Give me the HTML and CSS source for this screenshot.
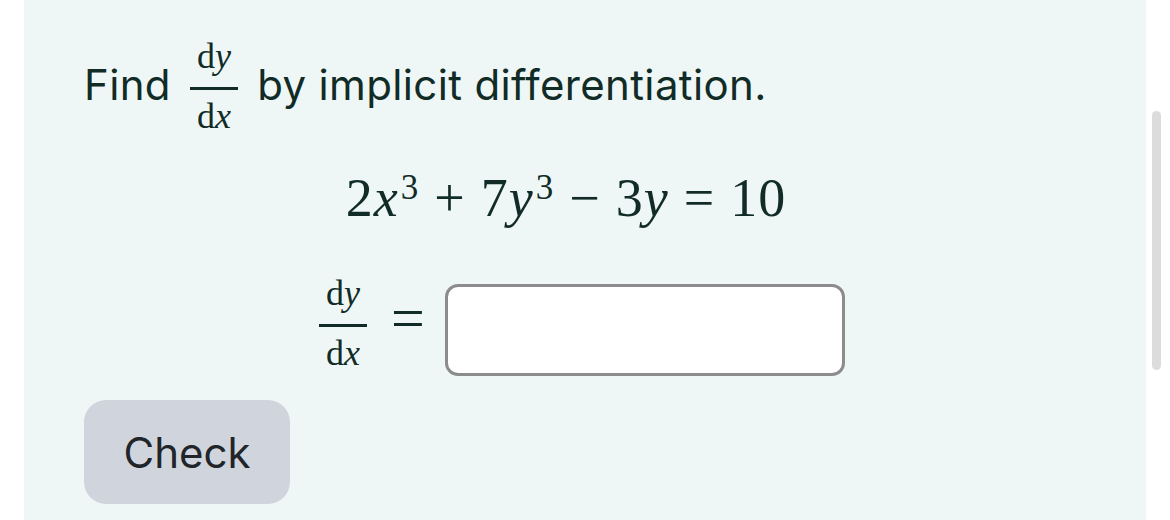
FILE: index.html
```html
<!DOCTYPE html>
<html>
<head>
<meta charset="utf-8">
<link rel="stylesheet" href="styles.css">
</head>
<body>
<div class="panel">
  <div class="title">Find <span class="frac"><span class="num"><span class="rm">d</span><span class="it">y</span></span><span class="bar"></span><span class="den"><span class="rm">d</span><span class="it">x</span></span></span> by implicit differentiation.</div>
  <div class="equation"><span class="rm">2</span><span class="it">x</span><span class="sup">3</span><span class="op">+</span><span class="rm">7</span><span class="it">y</span><span class="sup">3</span><span class="op">−</span><span class="rm">3</span><span class="it">y</span><span class="rel">=</span><span class="rm">10</span></div>
  <div class="answer-row">
    <span class="frac big"><span class="num"><span class="rm">d</span><span class="it">y</span></span><span class="bar"></span><span class="den"><span class="rm">d</span><span class="it">x</span></span></span>
    <span class="equals">=</span>
    <input class="answer" type="text" aria-label="answer">
  </div>
  <button class="check">Check</button>
</div>
<div class="scrollbar"></div>
</body>
</html>
```
FILE: styles.css
```css
html, body {
  margin: 0;
  padding: 0;
  background: #ffffff;
}
.panel {
  margin-left: 24px;
  width: 1122px;
  height: 520px;
  box-sizing: border-box;
  padding-top: 37px;
  background: #eff7f6;
  color: #112b27;
  font-family: "Inter", "Roboto", sans-serif;
  overflow: hidden;
}
.title {
  padding-left: 60px;
  font-size: 42px;
  letter-spacing: 0.35px;
}
.rm {
  font-family: "Liberation Serif", serif;
  font-style: normal;
}
.it {
  font-family: "Liberation Serif", serif;
  font-style: italic;
}
.frac {
  display: inline-flex;
  flex-direction: column;
  align-items: center;
  vertical-align: middle;
  font-size: 36px;
  line-height: 36px;
  margin: 0 7px;
  letter-spacing: 0;
}
.frac .num {
  padding: 0 7px 13px;
}
.frac .bar {
  align-self: stretch;
  height: 3px;
  background: #112b27;
}
.frac .den {
  padding: 7px 7px 6px;
}
.answer-row .frac {
  margin: 0;
}
.equation {
  margin-top: 28px;
  padding-right: 38px;
  text-align: center;
  font-family: "Liberation Serif", serif;
  font-size: 54px;
  line-height: 60px;
  letter-spacing: 1px;
}
.sup {
  font-family: "Liberation Serif", serif;
  font-size: 35px;
  line-height: 0;
  vertical-align: 17px;
  margin-left: 2px;
}
.op {
  margin: 0 15px;
}
.rel {
  margin: 0 15px;
}
.answer-row {
  margin-top: 46px;
  display: flex;
  justify-content: center;
  align-items: flex-start;
  padding-right: 6px;
}
.equals {
  font-family: "Liberation Serif", serif;
  font-size: 60px;
  line-height: 60px;
  margin: 14px 20px 0 24px;
}
.answer {
  margin-top: 10px;
  width: 400px;
  height: 92px;
  box-sizing: border-box;
  border: 3px solid #8c8c8c;
  border-radius: 13px;
  background: #ffffff;
  outline: none;
}
.check {
  display: block;
  margin: 23px 0 0 60px;
  width: 206px;
  height: 104px;
  border: none;
  border-radius: 22px;
  background: #d0d5dd;
  color: #212529;
  font-family: "Inter", "Roboto", sans-serif;
  font-size: 42px;
}
.scrollbar {
  position: absolute;
  left: 1152px;
  top: 111px;
  width: 9px;
  height: 259px;
  border-radius: 5px;
  background: #dcdcdc;
}
```
